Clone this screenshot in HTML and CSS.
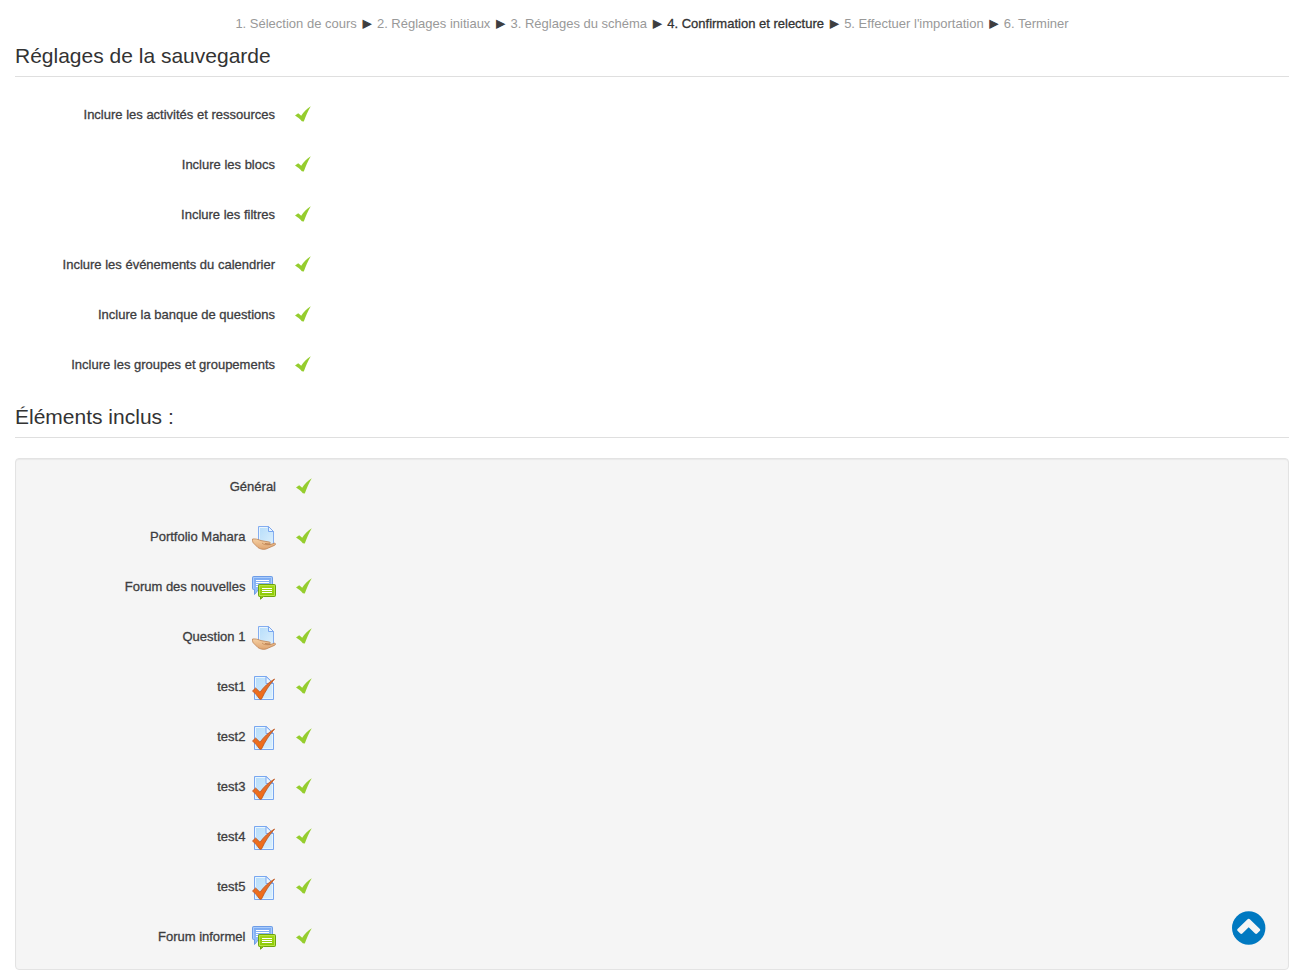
FILE: index.html
```html
<!DOCTYPE html>
<html lang="fr" dir="ltr">
  <head>
    <meta charset="utf-8">
    <title>Confirmation et relecture</title>
    <link rel="stylesheet" href="styles.css">
  </head>
  <body>
    <!-- icon definitions -->
    <svg class="sprite" aria-hidden="true">
      <defs>
        <linearGradient id="paper" x1="0" y1="0" x2="1" y2="1">
          <stop offset="0" stop-color="#b5dcfa"/>
          <stop offset="1" stop-color="#dcf0fd"/>
        </linearGradient>
        <linearGradient id="skin" x1="0" y1="0" x2="0" y2="1">
          <stop offset="0" stop-color="#f5cfa2"/>
          <stop offset="1" stop-color="#dfa470"/>
        </linearGradient>
        <linearGradient id="blue" x1="0" y1="0" x2="0" y2="1">
          <stop offset="0" stop-color="#7aaaf2"/>
          <stop offset="1" stop-color="#9cc3fa"/>
        </linearGradient>
        <linearGradient id="green" x1="0" y1="0" x2="0" y2="1">
          <stop offset="0" stop-color="#a4d81a"/>
          <stop offset="1" stop-color="#86c400"/>
        </linearGradient>
        <linearGradient id="orange" x1="0" y1="0" x2="0" y2="1">
          <stop offset="0" stop-color="#e0703a"/>
          <stop offset="1" stop-color="#f26c10"/>
        </linearGradient>
      </defs>
      <symbol id="tick" viewBox="0 0 16 16">
        <path fill="#95cd2e" d="M0 9.4 L3.2 7.2 L6.2 9.8 C8.6 6 11.8 2.6 15.8 0.2 C13 4.6 10.8 10 8.8 15.4 L6.8 15.2 C5 12.8 2.4 11 0 9.4Z"/>
      </symbol>
      <symbol id="assign" viewBox="0 0 24 24">
        <path fill="url(#paper)" stroke="#84adf0" d="M6.5 0.5 H16.5 L21.5 5.5 V19.5 H6.5Z"/>
        <path fill="none" stroke="#e8f5fe" d="M7.5 18 V1.5 H15.5"/>
        <path fill="#eaf5fe" stroke="#7aa6ef" d="M16.5 0.5 V5.5 H21.5Z"/>
        <path fill="url(#skin)" stroke="#bd8253" stroke-width="0.8" d="M0.5 13 C3 12.6 6.5 13.4 9 14.6 L17.2 16 C19 16.4 18.8 17.8 17 17.9 L13 17.6 L18 18.6 L22.6 17.2 C24 17.4 23.6 18.8 22.6 19.3 L14 23 C11.5 23.9 8 23 6 21.6 L2 17.6 C0.6 16.6 0.3 14.6 0.5 13Z"/>
        <path fill="none" stroke="#bd8253" stroke-width="0.7" d="M10 17 C11.5 18.8 15 19 18.5 18.6"/>
      </symbol>
      <symbol id="forum" viewBox="0 0 24 24">
        <path fill="url(#blue)" stroke="#6d9ce6" d="M1.5 0.5 H19.5 Q20.5 0.5 20.5 1.5 V12.5 Q20.5 13.5 19.5 13.5 H6.5 L2.5 18.5 V13.5 H1.5 Q0.5 13.5 0.5 12.5 V1.5 Q0.5 0.5 1.5 0.5Z"/>
        <path fill="none" stroke="#a9cbfb" d="M1.5 12.5 V1.5 H19.5 V8"/>
        <path stroke="#fff" d="M4 4.5 H17 M4 6.5 H17 M4 8.5 H6 M4 10.5 H6"/>
        <path fill="url(#green)" stroke="#6ea30f" d="M7.5 8.5 H22.5 Q23.5 8.5 23.5 9.5 V19.5 Q23.5 20.5 22.5 20.5 H11.5 L8.5 23.2 V20.5 H7.5 Q6.5 20.5 6.5 19.5 V9.5 Q6.5 8.5 7.5 8.5Z"/>
        <path fill="none" stroke="#b8e540" d="M7.5 19.5 V9.5 H22.5 V19.5Z"/>
        <path stroke="#fff" d="M10 12.5 H20 M10 14.5 H20 M10 16.5 H20"/>
      </symbol>
      <symbol id="quiz" viewBox="0 0 24 24">
        <path fill="url(#paper)" stroke="#78a7f0" d="M2.5 0.5 H14.5 L21.5 7.5 V23.5 H2.5Z"/>
        <path fill="none" stroke="#e8f5fe" d="M14 1.5 H3.5 V22.5 H20.5 V8"/>
        <path fill="#eaf5fe" stroke="#7aa6ef" d="M14 0.5 V7.5 H21.5Z"/>
        <path fill="url(#orange)" stroke="#bb5218" stroke-width="0.8" d="M0.5 15 L3.6 12 L8 16.2 C11.8 11 16.4 6.4 22.6 3 C17.4 8.6 13.2 15.4 9.4 23.2 H7.8 C5.8 20 3.4 17.4 0.5 15Z"/>
      </symbol>
    </svg>

    <nav class="stages" aria-label="Étapes">
      <span class="stage">1. Sélection de cours</span> <span class="sep">►</span>
      <span class="stage">2. Réglages initiaux</span> <span class="sep">►</span>
      <span class="stage">3. Réglages du schéma</span> <span class="sep">►</span>
      <span class="stage current">4. Confirmation et relecture</span> <span class="sep">►</span>
      <span class="stage">5. Effectuer l'importation</span> <span class="sep">►</span>
      <span class="stage">6. Terminer</span>
    </nav>

    <h2 class="title">Réglages de la sauvegarde</h2>
    <dl class="settings">
      <div class="item"><dt>Inclure les activités et ressources</dt><dd><svg class="tick" role="img" aria-label="Oui"><use href="#tick"/></svg></dd></div>
      <div class="item"><dt>Inclure les blocs</dt><dd><svg class="tick" role="img" aria-label="Oui"><use href="#tick"/></svg></dd></div>
      <div class="item"><dt>Inclure les filtres</dt><dd><svg class="tick" role="img" aria-label="Oui"><use href="#tick"/></svg></dd></div>
      <div class="item"><dt>Inclure les événements du calendrier</dt><dd><svg class="tick" role="img" aria-label="Oui"><use href="#tick"/></svg></dd></div>
      <div class="item"><dt>Inclure la banque de questions</dt><dd><svg class="tick" role="img" aria-label="Oui"><use href="#tick"/></svg></dd></div>
      <div class="item"><dt>Inclure les groupes et groupements</dt><dd><svg class="tick" role="img" aria-label="Oui"><use href="#tick"/></svg></dd></div>
    </dl>

    <h2 class="title">Éléments inclus :</h2>
    <dl class="settings section">
      <div class="item"><dt>Général</dt><dd><svg class="tick" role="img" aria-label="Oui"><use href="#tick"/></svg></dd></div>
      <div class="item"><dt>Portfolio Mahara <svg class="icon"><use href="#assign"/></svg></dt><dd><svg class="tick" role="img" aria-label="Oui"><use href="#tick"/></svg></dd></div>
      <div class="item"><dt>Forum des nouvelles <svg class="icon"><use href="#forum"/></svg></dt><dd><svg class="tick" role="img" aria-label="Oui"><use href="#tick"/></svg></dd></div>
      <div class="item"><dt>Question 1 <svg class="icon"><use href="#assign"/></svg></dt><dd><svg class="tick" role="img" aria-label="Oui"><use href="#tick"/></svg></dd></div>
      <div class="item"><dt>test1 <svg class="icon"><use href="#quiz"/></svg></dt><dd><svg class="tick" role="img" aria-label="Oui"><use href="#tick"/></svg></dd></div>
      <div class="item"><dt>test2 <svg class="icon"><use href="#quiz"/></svg></dt><dd><svg class="tick" role="img" aria-label="Oui"><use href="#tick"/></svg></dd></div>
      <div class="item"><dt>test3 <svg class="icon"><use href="#quiz"/></svg></dt><dd><svg class="tick" role="img" aria-label="Oui"><use href="#tick"/></svg></dd></div>
      <div class="item"><dt>test4 <svg class="icon"><use href="#quiz"/></svg></dt><dd><svg class="tick" role="img" aria-label="Oui"><use href="#tick"/></svg></dd></div>
      <div class="item"><dt>test5 <svg class="icon"><use href="#quiz"/></svg></dt><dd><svg class="tick" role="img" aria-label="Oui"><use href="#tick"/></svg></dd></div>
      <div class="item"><dt>Forum informel <svg class="icon"><use href="#forum"/></svg></dt><dd><svg class="tick" role="img" aria-label="Oui"><use href="#tick"/></svg></dd></div>
    </dl>

    <a class="back-to-top" href="#" aria-label="Haut de page">
      <svg viewBox="0 0 34 34">
        <circle cx="16.7" cy="17" r="16.7" fill="#0079c1"/>
        <path fill="#f5f5f5" d="M15.3 8.4 Q16.7 7.2 18.1 8.4 L27.9 18 Q28.7 19 27.9 19.8 L25.1 22.6 Q24.1 23.4 23.1 22.6 L16.7 16.2 L10.3 22.6 Q9.3 23.4 8.3 22.6 L5.5 19.8 Q4.7 19 5.5 18Z"/>
      </svg>
    </a>
  </body>
</html>
```
FILE: styles.css
```css
body {
  margin: 0;
  padding: 14px 13px 0 15px;
  font-family: 'Liberation Sans', Arial, sans-serif;
  font-size: 13px;
  line-height: 20px;
  color: #3d3d3f;
  background-color: #fff;
}

.sprite {
  position: absolute;
  width: 0;
  height: 0;
}

.stages {
  text-align: center;
}

.stage {
  color: #999;
}

.stage.current {
  color: #333;
  -webkit-text-stroke: 0.3px #333;
}

.sep {
  -webkit-text-stroke: 1px #3d3d3f;
}

.title {
  margin: 0 0 20px;
  border-bottom: 1px solid #dfdfdf;
  font-size: 21px;
  font-weight: normal;
  line-height: 40px;
  color: #333;
}

.stages + .title {
  margin-top: 2px;
}

.settings {
  margin: 0;
}

.item {
  display: flex;
  gap: 20px;
  height: 34px;
  margin-bottom: 16px;
}

.item dt {
  width: 260px;
  padding-top: 8px;
  text-align: right;
  -webkit-text-stroke: 0.3px #3d3d3f;
}

.item dd {
  display: flex;
  align-items: center;
  margin: 0;
}

.tick {
  width: 16px;
  height: 16px;
}

.icon {
  width: 24px;
  height: 24px;
  margin: -3px 0 -3px 3px;
  vertical-align: middle;
}

.section {
  padding-top: 10px;
  border: 1px solid #e3e3e3;
  border-radius: 4px;
  background-color: #f5f5f5;
  box-shadow: inset 0 1px 1px rgba(0, 0, 0, 0.05);
}

.back-to-top {
  position: fixed;
  right: 36px;
  bottom: 26px;
  width: 34px;
  height: 34px;
}

.back-to-top svg {
  display: block;
}
```
